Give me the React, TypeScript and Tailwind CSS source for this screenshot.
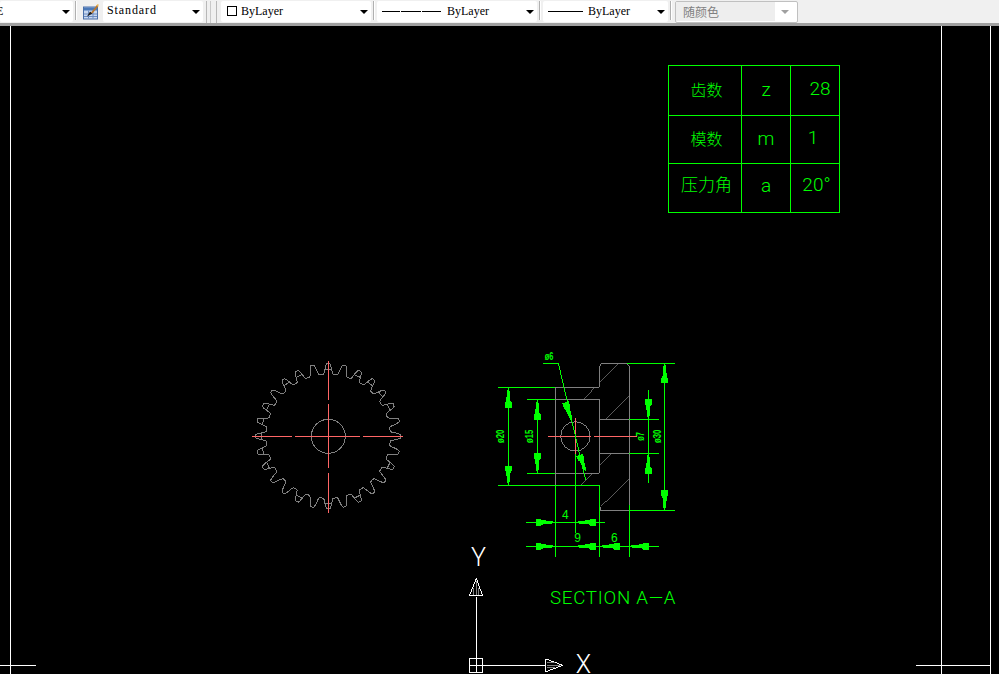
const GREEN = '#00ff00';
const GRAY = '#808080';
const RED = '#ff6666';
const GEAR_X = 328.3;
const GEAR_Y = 436.3;
const TEETH = 28;

// gear outline, 28 teeth sampled around the pitch circle
const gearPath = () => {
  const pts: string[] = [];
  const samples = 24;
  for (let t = 0; t < TEETH; t++) {
    for (let s = 0; s < samples; s++) {
      const u = s / samples - 0.5;
      const a = Math.abs(u);
      let k = 0;
      if (a < 0.08) k = 1;
      else if (a < 0.36) {
        const v = (a - 0.08) / 0.28;
        k = 1 - v * v * (3 - 2 * v);
      }
      const r = 62 + 10.5 * k;
      const ang = ((t + u) / TEETH) * Math.PI * 2 - Math.PI / 2;
      pts.push(`${(GEAR_X + r * Math.cos(ang)).toFixed(1)},${(GEAR_Y + r * Math.sin(ang)).toFixed(1)}`);
    }
  }
  return `M${pts.join('L')}Z`;
};

// the short chords some teeth show across their base
const chordTeeth = [0, 2, 3, 4, 5, 9, 12, 14, 16, 19, 20, 21, 22, 23, 25, 26];
const chordPath = () =>
  chordTeeth
    .map((t) => {
      const r = 67;
      const p = (u: number) => {
        const ang = ((t + u) / TEETH) * Math.PI * 2 - Math.PI / 2;
        return `${(GEAR_X + r * Math.cos(ang)).toFixed(1)} ${(GEAR_Y + r * Math.sin(ang)).toFixed(1)}`;
      };
      return `M${p(-0.22)}L${p(0.22)}`;
    })
    .join('');

// dimension arrow: thin at the tip, block at the tail (coords of the x3 section group)
const arrow = (tx: number, ty: number, bx: number, by: number) => {
  const dx = bx - tx;
  const dy = by - ty;
  const l = Math.hypot(dx, dy);
  const ux = dx / l;
  const uy = dy / l;
  const nx = -uy;
  const ny = ux;
  const at = (d: number, w: number) => `${tx + ux * d + nx * w},${ty + uy * d + ny * w}`;
  const s = l * 0.72;
  return [
    at(0, 0), at(l * 0.15, 3.5), at(s, 7), at(s, 10), at(l, 10),
    at(l, -10), at(s, -10), at(s, -7), at(l * 0.15, -3.5),
  ].join(' ');
};

const Line = ({ d, c, w = 3 }: { d: string; c: string; w?: number }) => (
  <path d={d} stroke={c} strokeWidth={w} fill="none" />
);

const sectionGreen = [
  'M39 127H211', 'M39 421H343', 'M70 127V421',
  'M126 163H211', 'M126 385H211', 'M157 163V385',
  'M426 55H570', 'M433 497H570', 'M539 55V497',
  'M433 223H522', 'M433 325H522', 'M490 135V415',
  'M175 55H220L302 405',
  'M123 532H360', 'M123 604H522',
  'M211 421V635', 'M271 327V563', 'M343 421V635', 'M433 480V635',
];

const sectionGray = [
  'M349 55H426L433 65V497H347V485',
  'M349 55L343 68V127H211V421H343',
  'M211 163H343V385H211',
  'M343 223H433', 'M343 325H433',
];

const hatches = [
  'M343 112L402 55', 'M297 162L330 127', 'M362 222L433 152',
  'M343 363L381 325', 'M288 421L322 385', 'M347 485L433 402',
];

const arrows: [number, number, number, number][] = [
  [70, 127, 70, 190], [70, 421, 70, 363],
  [157, 163, 157, 226], [157, 385, 157, 324],
  [539, 55, 539, 115], [539, 497, 539, 435],
  [490, 223, 490, 162], [490, 325, 490, 387],
  [262, 232, 241, 172], [303, 380, 283, 330],
  [211, 532, 153, 532], [271, 532, 333, 532],
  [211, 604, 153, 604], [271, 604, 333, 604],
  [343, 604, 405, 604], [433, 604, 492, 604],
];

const Drawing = () => (
  <svg
    className="absolute inset-0 block h-full w-full"
    viewBox="0 26 999 648"
    shapeRendering="crispEdges"
  >
    {/* sheet limits */}
    <path d="M10.5 26V674M0 665.5H36M941.5 26V674M990.5 26V674M916 665.5H990" stroke="#ffffff" fill="none" />

    {/* gear */}
    <path d={gearPath()} stroke={GRAY} fill="none" />
    <path d={chordPath()} stroke={GRAY} fill="none" />
    <circle cx={GEAR_X} cy={GEAR_Y} r="17" stroke={GRAY} fill="none" />
    <path
      d="M252 436.5H292M295 436.5H360M363 436.5H403M328.5 361V400M328.5 404V468M328.5 473V513"
      stroke={RED}
      fill="none"
    />

    {/* section A-A, coordinates at x3 */}
    <g transform="translate(485 345) scale(0.33333)">
      {hatches.map((d) => (
        <Line key={d} d={d} c="#5a5a5a" />
      ))}
      {sectionGray.map((d) => (
        <Line key={d} d={d} c={GRAY} />
      ))}
      <circle cx="271" cy="274" r="44" stroke={GRAY} strokeWidth="3" fill="none" />
      <Line d="M190 274H317M327 274H455M271 220V327" c={RED} />
      {sectionGreen.map((d) => (
        <Line key={d} d={d} c={GREEN} />
      ))}
      {arrows.map((a) => (
        <polygon key={a.join()} points={arrow(a[0], a[1], a[2], a[3])} fill={GREEN} />
      ))}
      <g fill={GREEN} fontFamily="'Liberation Sans', sans-serif" fontSize="34" fontWeight="700" textAnchor="middle">
        <text x="192" y="45" textLength="26" lengthAdjust="spacingAndGlyphs">ø6</text>
        <text x="241" y="521" fontWeight="400" fontSize="36">4</text>
        <text x="278" y="591" fontWeight="400" fontSize="36">9</text>
        <text x="388" y="591" fontWeight="400" fontSize="36">6</text>
        <text transform="translate(57 274) rotate(-90)" textLength="40" lengthAdjust="spacingAndGlyphs">ø20</text>
        <text transform="translate(145 274) rotate(-90)" textLength="40" lengthAdjust="spacingAndGlyphs">ø15</text>
        <text transform="translate(478 274) rotate(-90)" textLength="26" lengthAdjust="spacingAndGlyphs">ø7</text>
        <text transform="translate(528 274) rotate(-90)" textLength="40" lengthAdjust="spacingAndGlyphs">ø30</text>
      </g>
    </g>

    <text
      x="550"
      y="604"
      fill={GREEN}
      fontFamily="Roboto, sans-serif"
      fontWeight="300"
      fontSize="18.7"
      letterSpacing="0.75"
    >
      SECTION A—A
    </text>

    {/* UCS icon, coordinates at x3 */}
    <g transform="translate(460 540) scale(0.33333)" stroke="#ffffff" strokeWidth="3" fill="none">
      <path d="M28 355H68V397H28ZM28 376H68M49 355V397M49 355V170M68 376H258" />
      <path d="M49 115L28 168H68Z" />
      <path d="M49 122V165M42 145V165M56 145V165" stroke="#808080" />
      <path d="M258 357V395L308 376Z" />
      <path d="M262 376H300M262 368H285M262 384H285" stroke="#808080" />
    </g>
    <g fill="#ffffff" fontFamily="Roboto, sans-serif" fontWeight="300" fontSize="25" textAnchor="middle">
      <text x="478.5" y="566">Y</text>
      <text x="583.5" y="673">X</text>
    </g>
  </svg>
);

const Arrow = ({ disabled }: { disabled?: boolean }) => (
  <span
    className={`h-0 w-0 border-x-[4px] border-t-[4px] border-x-transparent ${
      disabled ? 'border-t-[#a0a0a0]' : 'border-t-black'
    }`}
  />
);

const Combo = ({ className, children }: { className: string; children?: React.ReactNode }) => (
  <div
    className={`flex h-[21px] items-center justify-between overflow-hidden rounded-[2px] bg-white pr-[3px] font-['Liberation_Serif',serif] text-[12px] text-black ${className}`}
  >
    <div className="-mt-px flex items-center whitespace-nowrap">{children}</div>
    <Arrow />
  </div>
);

const Sep = () => <div className="mx-[2px] h-[19px] w-[2px] border-x border-x-[#b0b0b0] border-r-white" />;

const TableIcon = () => (
  <svg viewBox="0 0 16 16" className="ml-[4px] mr-[4px] mt-[2px] h-[17px] w-[16px] shrink-0">
    <rect x="0.5" y="3.5" width="14" height="12" fill="#c8d8f0" stroke="#4a6fa8" />
    <rect x="1" y="4" width="13" height="3" fill="#4a78b8" />
    <path d="M1 10.5H14M1 13H14M5.5 7V15M10 7V15" stroke="#6c8cc0" />
    <path d="M4 13L7 8L9.5 10Z" fill="#202020" />
    <path d="M8 9L14 1.5L15.5 2.5L9.5 10Z" fill="#b87830" />
    <path d="M13 2L15 0.5L15.8 1.5L14.5 3Z" fill="#e8b050" />
  </svg>
);

const Cell = ({ children, className = '' }: { children: React.ReactNode; className?: string }) => (
  <div className={`flex items-center justify-center border-b border-r border-[#00ff00] ${className}`}>{children}</div>
);

const LATIN = "font-['Roboto',sans-serif] text-[19px] font-light";

const ParamTable = () => (
  <div className="absolute left-[668px] top-[39px] grid w-[172px] grid-cols-[73px_49px_49px] grid-rows-[50px_48px_49px] border-l border-t border-[#00ff00] font-['Noto_Sans_CJK_SC',sans-serif] text-[16px] font-light text-[#00ff00]">
    <Cell className="pb-[4px] pl-[3px]">齿数</Cell>
    <Cell className={LATIN}>z</Cell>
    <Cell className={`pb-[3px] pl-[10px] ${LATIN}`}>28</Cell>
    <Cell className="pb-[3px] pl-[3px]">模数</Cell>
    <Cell className={LATIN}>m</Cell>
    <Cell className={`pb-[2px] pr-[4px] ${LATIN}`}>1</Cell>
    <Cell className="pb-[8px] pl-[3px] text-[17px]">压力角</Cell>
    <Cell className={`pb-[4px] ${LATIN}`}>a</Cell>
    <Cell className={`pb-[6px] pl-[3px] ${LATIN}`}>20°</Cell>
  </div>
);

export default function App() {
  return (
    <div className="flex h-[674px] w-[999px] flex-col overflow-hidden bg-black">
      <div className="flex h-[26px] shrink-0 items-start border-b-[3px] border-b-[#a0a0a0] bg-[#f0f0f0] pt-px">
        <Combo className="w-[73px]">
          <span className="-ml-[4px]">E</span>
        </Combo>
        <Sep />
        <TableIcon />
        <Combo className="w-[100px] pl-[4px]">
          <span className="-mt-[2px] tracking-[0.9px]">Standard</span>
        </Combo>
        <div className="ml-[3px] mr-[4px] flex h-[22px] w-[11px] justify-between border-x border-x-[#b8b8b8]">
          <div className="ml-[3px] h-full w-px bg-[#c8c8c8]" />
        </div>
        <Combo className="w-[150px] pl-[6px]">
          <span className="mr-[4px] h-[10px] w-[10px] border border-black" />
          ByLayer
        </Combo>
        <Sep />
        <Combo className="w-[160px] pl-[5px]">
          <span className="h-px w-[18px] bg-black" />
          <span className="ml-px h-px w-[20px] bg-black" />
          <span className="ml-px mr-[6px] h-px w-[19px] bg-black" />
          ByLayer
        </Combo>
        <Sep />
        <Combo className="w-[125px] pl-[5px]">
          <span className="mr-[5px] h-px w-[35px] bg-black" />
          ByLayer
        </Combo>
        <Sep />
        <div className="ml-px flex h-[22px] w-[123px] items-center justify-between rounded-[2px] border border-[#c0c0c0] bg-white pr-[8px]">
          <div className="-mt-px flex h-[19px] w-[99px] items-center bg-[#eeeeee] pl-[7px] font-['Noto_Sans_CJK_SC',sans-serif] text-[12px] text-[#808080]">
            随颜色
          </div>
          <Arrow disabled />
        </div>
      </div>
      <div className="relative flex-1">
        <Drawing />
        <ParamTable />
      </div>
    </div>
  );
}
